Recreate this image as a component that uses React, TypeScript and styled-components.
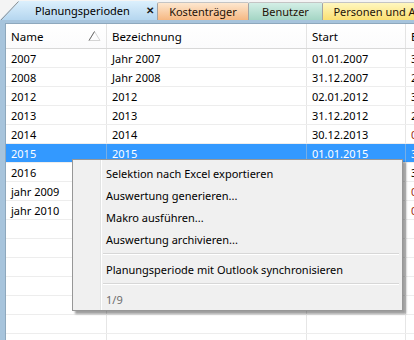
import React from 'react';
import styled, { createGlobalStyle } from 'styled-components';

const GlobalStyle = createGlobalStyle`
  html, body {
    margin: 0;
    padding: 0;
    background: #f2f2f2;
  }
  body {
    font-family: 'Noto Sans', 'Liberation Sans', sans-serif;
    font-size: 11px;
    color: #000;
  }
`;

type Period = { name: string; title: string; start: string; end: string; late?: boolean };

const periods: Period[] = [
  { name: '2007', title: 'Jahr 2007', start: '01.01.2007', end: '31.12.2007' },
  { name: '2008', title: 'Jahr 2008', start: '31.12.2007', end: '28.12.2008' },
  { name: '2012', title: '2012', start: '02.01.2012', end: '30.12.2012' },
  { name: '2013', title: '2013', start: '31.12.2012', end: '29.12.2013' },
  { name: '2014', title: '2014', start: '30.12.2013', end: '04.01.2015', late: true },
  { name: '2015', title: '2015', start: '01.01.2015', end: '31.12.2015' },
  { name: '2016', title: '2016', start: '01.01.2016', end: '31.12.2016' },
  { name: 'jahr 2009', title: 'jahr 2009', start: '01.01.2009', end: '01.01.2010', late: true },
  { name: 'jahr 2010', title: 'jahr 2010', start: '01.01.2010', end: '01.01.2011', late: true },
];

const SELECTED = 5;
const EMPTY_ROWS = 8;

const tabs = [
  { label: 'Kostenträger', width: 91, top: '#fde7cf', bottom: '#f6b883' },
  { label: 'Benutzer', width: 74, top: '#d3efe6', bottom: '#a4d5c4' },
  { label: 'Personen und Abteilungen', width: 160, top: '#fff7bf', bottom: '#fadf72' },
];

const menuItems = [
  ['Selektion nach Excel exportieren', 'Auswertung generieren...', 'Makro ausführen...', 'Auswertung archivieren...'],
  ['Planungsperiode mit Outlook synchronisieren'],
];

function SortGlyph() {
  return (
    <svg width="13" height="10" viewBox="0 0 13 10">
      <path d="M1 9.5 L6.5 0.5 L12 9.5 Z" fill="none" stroke="#d4d4d4" strokeWidth="1" />
      <path d="M1 9.5 L6.5 0.5" stroke="#6a6a6a" strokeWidth="1" />
    </svg>
  );
}

function App() {
  return (
    <>
      <GlobalStyle />
      <StyledWindow>
        <StyledTabStrip>
          <StyledActiveTab>
            <StyledSlant width="19" height="20" viewBox="0 0 19 20">
              <path d="M0.5 19.5 L18.5 0.5" stroke="#8c8c8c" strokeWidth="1" />
            </StyledSlant>
            <span>Planungsperioden</span>
            <StyledClose>✕</StyledClose>
          </StyledActiveTab>
          {tabs.map((tab) => (
            <StyledTab key={tab.label} $width={tab.width} $top={tab.top} $bottom={tab.bottom}>
              {tab.label}
            </StyledTab>
          ))}
        </StyledTabStrip>

        <StyledBody>
          <StyledGrid>
            <StyledHeaderRow>
              <StyledHeaderCell>
                Name
                <SortGlyph />
              </StyledHeaderCell>
              <StyledHeaderCell>Bezeichnung</StyledHeaderCell>
              <StyledHeaderCell>Start</StyledHeaderCell>
              <StyledHeaderCell>Ende</StyledHeaderCell>
            </StyledHeaderRow>
            {periods.map((p, i) => (
              <StyledRow key={p.name} $selected={i === SELECTED}>
                <StyledCell>{p.name}</StyledCell>
                <StyledCell>{p.title}</StyledCell>
                <StyledCell>{p.start}</StyledCell>
                <StyledCell $late={p.late}>{p.end}</StyledCell>
              </StyledRow>
            ))}
            {Array.from({ length: EMPTY_ROWS }).map((_, i) => (
              <StyledRow key={`empty-${i}`}>
                <StyledCell />
                <StyledCell />
                <StyledCell />
                <StyledCell />
              </StyledRow>
            ))}
          </StyledGrid>
        </StyledBody>

        <StyledMenu>
          {menuItems.map((group, gi) => (
            <React.Fragment key={gi}>
              {group.map((item) => (
                <StyledMenuItem key={item}>{item}</StyledMenuItem>
              ))}
              <StyledMenuSeparator />
            </React.Fragment>
          ))}
          <StyledMenuItem $muted>1/9</StyledMenuItem>
        </StyledMenu>
      </StyledWindow>
    </>
  );
}

export default App;

const StyledWindow = styled.div`
  position: relative;
  display: flex;
  flex-direction: column;
  width: 414px;
  height: 340px;
  overflow: hidden;
  background: #f2f2f2;
`;

const StyledTabStrip = styled.div`
  display: flex;
  align-items: flex-end;
  height: 20px;
  flex-shrink: 0;
  background: #f4f4f4;
  white-space: nowrap;
`;

const StyledActiveTab = styled.div`
  position: relative;
  display: flex;
  align-items: center;
  gap: 16px;
  flex-shrink: 0;
  box-sizing: border-box;
  width: 157px;
  height: 19px;
  padding: 0 0 1px 35px;
  background: linear-gradient(#dcf0fd, #b5d6ef);
  clip-path: polygon(18px 0, 100% 0, 100% 100%, 0 100%);
  color: #000;
`;

const StyledSlant = styled.svg`
  position: absolute;
  left: 0;
  top: 0;
`;

const StyledClose = styled.span`
  font-size: 10px;
  font-weight: 700;
  color: #1a1a1a;
`;

const StyledTab = styled.div<{ $width: number; $top: string; $bottom: string }>`
  display: flex;
  align-items: center;
  justify-content: center;
  flex-shrink: 0;
  box-sizing: border-box;
  width: ${(p) => p.$width}px;
  height: 18px;
  padding-bottom: 1px;
  border-top: 1px solid #c4c4c4;
  border-left: 1px solid #a4a4a4;
  border-top-left-radius: 2px;
  background: linear-gradient(${(p) => p.$top}, ${(p) => p.$bottom});
  color: #1f1206;
`;

const StyledBody = styled.div`
  display: flex;
  flex: 1;
  min-height: 0;
  padding: 3px 0 0 5px;
  background: #a7c4dc;
`;

const StyledGrid = styled.div`
  flex: 1;
  overflow: hidden;
  border-top: 1px solid #8ea8bd;
  border-left: 1px solid #8ea8bd;
  background: #fff;
`;

const StyledHeaderRow = styled.div`
  display: grid;
  grid-template-columns: 101px 200px 99px 100px;
  height: 25px;
  box-sizing: border-box;
  border-bottom: 1px solid #d8d8d8;
  background: linear-gradient(#ffffff, #fbfbfc);
`;

const StyledHeaderCell = styled.div`
  display: flex;
  align-items: center;
  justify-content: space-between;
  box-sizing: border-box;
  padding: 0 5px 0 5px;
  border-right: 1px solid #e4e4e4;
  font-size: 11.5px;
  white-space: nowrap;
  overflow: hidden;
`;

const StyledRow = styled.div<{ $selected?: boolean }>`
  display: grid;
  grid-template-columns: 101px 200px 99px 100px;
  height: 19px;
  box-sizing: border-box;
  border-bottom: 1px solid #ededed;
  background: ${(p) => (p.$selected ? '#3399ff' : '#fff')};
  color: ${(p) => (p.$selected ? '#fff' : '#000')};
`;

const StyledCell = styled.div<{ $late?: boolean }>`
  display: flex;
  align-items: center;
  box-sizing: border-box;
  padding-left: 5px;
  border-right: 1px solid rgba(200, 200, 200, 0.45);
  white-space: nowrap;
  overflow: hidden;
  color: ${(p) => (p.$late ? '#9a2a10' : 'inherit')};
`;

const StyledMenu = styled.div`
  position: absolute;
  left: 72px;
  top: 159px;
  width: 331px;
  box-sizing: border-box;
  padding: 2px 2px 0;
  border: 1px solid #979797;
  background:
    linear-gradient(
      to right,
      transparent 27px,
      #e2e3e3 27px,
      #e2e3e3 28px,
      #ffffff 28px,
      #ffffff 29px,
      transparent 29px
    ),
    #f0f0f0;
  box-shadow: 3px 3px 2px rgba(0, 0, 0, 0.38);
`;

const StyledMenuItem = styled.div<{ $muted?: boolean }>`
  display: flex;
  align-items: center;
  height: 22px;
  padding-left: 31px;
  white-space: nowrap;
  color: ${(p) => (p.$muted ? '#6d6d6d' : '#000')};
`;

const StyledMenuSeparator = styled.div`
  height: 0;
  margin: 3px 1px 3px 28px;
  border-top: 1px solid #d7d7d7;
  border-bottom: 1px solid #ffffff;
`;
